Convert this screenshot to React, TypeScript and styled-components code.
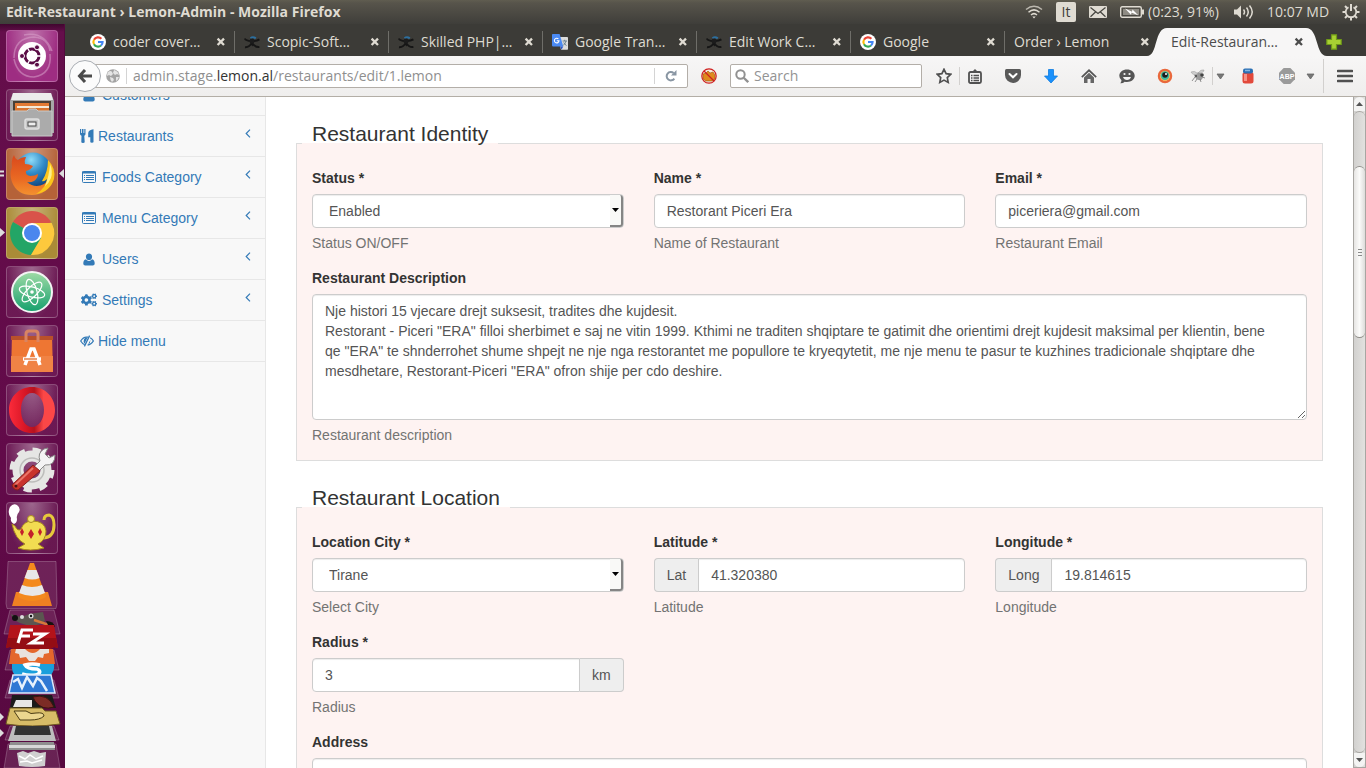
import React from "react";
import styled, { createGlobalStyle, css } from "styled-components";
import { FaCogs } from "react-icons/fa";

const uiFont = '"Open Sans", "Noto Sans", sans-serif';
const pageFont = '"Liberation Sans", Arial, sans-serif';

const GlobalStyle = createGlobalStyle`
  *, *::before, *::after { box-sizing: border-box; }
  body { margin: 0; background: #fff; }
  button, input, select, textarea { font: inherit; color: inherit; }
  button { padding: 0; border: 0; background: none; }
  svg { display: block; flex: none; }
`;

/* ---------- desktop ---------- */

const Desktop = styled.div`
  height: 100vh;
  display: flex;
  flex-direction: column;
  overflow: hidden;
`;

const TopPanel = styled.header`
  flex: none;
  height: 24px;
  padding: 0 6px;
  display: flex;
  align-items: center;
  justify-content: space-between;
  background: linear-gradient(#605d50 0, #57544b 3px, #3f3e3a 100%);
  color: #dfdbd2;
  font-family: ${uiFont};
  font-size: 14px;
  line-height: 24px;
  white-space: nowrap;
`;

const WindowTitle = styled.strong`
  font-weight: 700;
`;

const Indicators = styled.div`
  display: flex;
  align-items: center;
  gap: 13px;
`;

const Indicator = styled.button`
  display: flex;
  align-items: center;
  gap: 4px;
  height: 24px;
  text-align: left;
`;

const KeyboardLayout = styled.button`
  width: 20px;
  height: 20px;
  border-radius: 2px;
  background: #dfdbd2;
  color: #3c3b37;
  font-size: 14px;
  line-height: 20px;
`;

const IndicatorText = styled.span<{ $width: number }>`
  width: ${(p) => p.$width}px;
`;

const Workspace = styled.div`
  flex: 1;
  min-height: 0;
  display: flex;
`;

/* ---------- launcher ---------- */

const Launcher = styled.nav`
  flex: none;
  width: 65px;
  overflow: hidden;
  display: flex;
  flex-direction: column;
  padding-top: 6px;
  border-right: 1px solid #54093e;
  background: linear-gradient(#40062f 0, #650e4b 8px, #620a49 60%, #570940 100%);
`;

const LauncherItem = styled.button`
  flex: none;
  position: relative;
  width: 100%;
  height: 52px;
  margin-bottom: 7px;
  padding-left: 6px;
`;

const Tile = styled.span<{ $color?: string }>`
  display: block;
  width: 52px;
  height: 52px;
  border: 1px solid rgba(255, 255, 255, 0.22);
  border-radius: 4px;
  background: radial-gradient(ellipse at 50% 0, rgba(255, 255, 255, 0.38), rgba(255, 255, 255, 0.06) 75%), ${(p) => p.$color || "transparent"};

  & > svg { margin: -1px; }
`;

const Pip = styled.svg<{ $side: "left" | "right" }>`
  position: absolute;
  top: 20px;
  ${(p) => (p.$side === "left" ? css`left: 0;` : css`right: 0;`)}
`;

/* ---------- browser chrome ---------- */

const Browser = styled.div`
  flex: 1;
  min-width: 0;
  display: flex;
  flex-direction: column;
`;

const TabStrip = styled.div`
  flex: none;
  height: 32px;
  padding: 4px 0 0 16px;
  display: flex;
  align-items: center;
  background: #3c3b37;
  font-family: ${uiFont};
  font-size: 14px;
  line-height: 28px;
  color: #dfdbd2;
`;

const Tab = styled.div<{ $active?: boolean; $last?: boolean }>`
  position: relative;
  flex: 0 1 154px;
  min-width: 0;
  height: 28px;
  padding: 0 9px 0 ${(p) => (p.$active ? 12 : 9)}px;
  display: flex;
  align-items: center;
  gap: 7px;
  color: ${(p) => (p.$active ? "#4c4c4c" : "inherit")};

  &::after {
    content: "";
    position: absolute;
    right: 0;
    top: 3px;
    height: 22px;
    width: 1px;
    background: ${(p) => (p.$active || p.$last ? "transparent" : "#6f6e69")};
  }
`;

const TabShape = styled.svg`
  position: absolute;
  left: -12px;
  top: 0;
  width: calc(100% + 26px);
  height: 28px;
`;

const TabLabel = styled.span`
  position: relative;
  flex: 1;
  min-width: 0;
  overflow: hidden;
  white-space: nowrap;
`;

const TabClose = styled.button`
  position: relative;
  width: 10px;
  height: 10px;
`;

const NewTab = styled.button`
  margin-left: 13px;
`;

const Toolbar = styled.div`
  flex: none;
  height: 41px;
  padding-left: 4px;
  display: flex;
  align-items: center;
  border-bottom: 1px solid #b3aea6;
  background: linear-gradient(#f7f6f6, #efeeed);
  font-family: ${uiFont};
  font-size: 14px;
`;

const BackButton = styled.button`
  flex: none;
  z-index: 1;
  width: 32px;
  height: 32px;
  margin-right: -8px;
  display: grid;
  place-items: center;
  border: 1px solid #a9adb3;
  border-radius: 50%;
  background: #fbfbfb;
`;

const UrlBar = styled.div`
  flex: 1;
  min-width: 0;
  height: 24px;
  padding-left: 12px;
  display: flex;
  align-items: center;
  border: 1px solid #b3aea8;
  border-radius: 2px;
  background: #fff;
`;

const UrlText = styled.div`
  flex: 1;
  min-width: 0;
  margin-left: 6px;
  padding-left: 6px;
  border-left: 1px solid #d4d4d4;
  color: #8f8f8f;
  line-height: 16px;
  white-space: nowrap;
  outline: 0;

  b { font-weight: 400; color: #333; }
`;

const ReloadButton = styled.button`
  width: 33px;
  height: 16px;
  display: grid;
  place-items: center;
  border-left: 1px solid #d4d4d4;
`;

const SearchBox = styled.label`
  flex: none;
  width: 192px;
  height: 24px;
  padding: 0 4px;
  display: flex;
  align-items: center;
  gap: 5px;
  border: 1px solid #b3aea8;
  border-radius: 2px;
  background: #fff;

  input {
    flex: 1;
    min-width: 0;
    padding: 0;
    border: 0;
    outline: 0;
    background: none;
    line-height: 20px;
  }
  input::placeholder { color: #939393; opacity: 1; }
`;

const ToolButton = styled.button<{ $width?: number }>`
  flex: none;
  width: ${(p) => p.$width || 38}px;
  height: 24px;
  display: grid;
  place-items: center;
`;

const ToolGap = styled.span<{ $width: number }>`
  flex: none;
  width: ${(p) => p.$width}px;
`;

const ToolSeparator = styled.span<{ $height: number }>`
  flex: none;
  width: 1px;
  height: ${(p) => p.$height}px;
  background: #d2d0ce;
`;

/* ---------- page ---------- */

const Viewport = styled.div`
  flex: 1;
  min-height: 0;
  display: flex;
  overflow: hidden;
  background: #fff;
  color: #333;
  font-family: ${pageFont};
  font-size: 14px;
  line-height: 20px;
`;

const Sidebar = styled.nav`
  flex: none;
  width: 201px;
  overflow: hidden;
  border-right: 1px solid #e7e7e7;
  background: #f8f8f8;
`;

const MenuList = styled.ul`
  list-style: none;
  margin: -22px 0 0;
  padding: 0;
`;

const MenuLink = styled.a`
  display: flex;
  align-items: center;
  gap: 4px;
  height: 41px;
  padding: 0 14px 0 15px;
  border-bottom: 1px solid #e7e7e7;
  color: #337ab7;
  text-decoration: none;
`;

const MenuIcon = styled.span<{ $wide?: boolean }>`
  width: ${(p) => (p.$wide ? 18 : 14)}px;
  display: flex;
  justify-content: center;
`;

const Chevron = styled.svg`
  margin: 0 0 6px auto;
`;

const Main = styled.main`
  flex: 1;
  min-width: 0;
  overflow: hidden;
  padding: 22px 30px 0;
`;

const Section = styled.fieldset`
  min-width: 0;
  margin: 0 0 22px;
  padding: 0 15px;
  border: 1px solid #ddd;
  background: #fef3f2;
`;

const SectionTitle = styled.legend`
  margin-left: -10px;
  padding: 0 10px 18px;
  font-size: 21px;
  line-height: 30px;
`;

const Fields = styled.div`
  display: grid;
  grid-template-columns: repeat(3, 1fr);
  column-gap: 30px;
  padding-top: 1px;
`;

const Field = styled.div<{ $full?: boolean }>`
  min-width: 0;
  grid-column: ${(p) => (p.$full ? "1 / -1" : "auto")};
  margin-bottom: 15px;
`;

const FieldLabel = styled.label`
  display: block;
  margin-bottom: 6px;
  font-weight: 700;
`;

const Help = styled.p`
  margin: 5px 0 0;
  color: #737373;
`;

const control = css`
  display: block;
  width: 100%;
  border: 1px solid #ccc;
  border-radius: 4px;
  background: #fff;
  box-shadow: inset 0 1px 1px rgba(0, 0, 0, 0.075);
  color: #555;
  outline: 0;
`;

const TextInput = styled.input`
  ${control}
  height: 34px;
  padding: 6px 12px;
`;

const TextArea = styled.textarea`
  ${control}
  height: 126px;
  padding: 6px 24px 6px 12px;
  resize: vertical;
`;

const SelectWrap = styled.div`
  position: relative;
`;

const Select = styled.select`
  ${control}
  appearance: none;
  height: 34px;
  padding: 6px 16px;
`;

const SelectArrow = styled.span`
  position: absolute;
  top: 1px;
  right: 1px;
  bottom: 1px;
  width: 13px;
  display: grid;
  place-items: center;
  border-right: 2px solid #858585;
  border-bottom: 2px solid #858585;
  border-radius: 0 3px 3px 0;
  background: #f9f9f7;
  pointer-events: none;
`;

const InputGroup = styled.div`
  display: flex;

  ${TextInput} { flex: 1; min-width: 0; }
  ${TextInput}:not(:first-child) { border-top-left-radius: 0; border-bottom-left-radius: 0; }
  ${TextInput}:not(:last-child) { border-top-right-radius: 0; border-bottom-right-radius: 0; }
`;

const Addon = styled.span<{ $end?: boolean }>`
  flex: none;
  padding: 6px 12px;
  border: 1px solid #ccc;
  background: #eee;
  color: #555;
  ${(p) =>
    p.$end
      ? css`border-left: 0; border-radius: 0 4px 4px 0;`
      : css`border-right: 0; border-radius: 4px 0 0 4px;`}
`;

/* ---------- scrollbar ---------- */

const ScrollBar = styled.div`
  flex: none;
  width: 13px;
  display: flex;
  flex-direction: column;
  border: 1px solid #a8a6a2;
  border-top: 0;
  background: linear-gradient(90deg, #d2d1cf, #e2e1df);
`;

const ScrollButton = styled.button`
  height: 14px;
  display: grid;
  place-items: center;
  border-radius: 6px 6px 0 0;
  background: #f4f4f3;

  &:last-child { border-radius: 0 0 6px 6px; }
`;

const ScrollTrack = styled.div`
  flex: 1;
  min-height: 0;
  padding-top: 54px;
  border: 1px solid #a8a6a2;
  border-width: 1px 0;
  border-radius: 6px;
`;

const ScrollThumb = styled.div`
  height: 42%;
  max-height: 172px;
  display: grid;
  place-items: center;
  border: 1px solid #8f8d89;
  border-width: 1px 0;
  border-radius: 6px;
  background: linear-gradient(90deg, #e6e5e3, #fbfbfa 50%, #dddcda);
`;

/* ---------- small icons ---------- */

const GoogleIcon = () => (
  <svg width="16" height="16" viewBox="0 0 16 16">
    <circle cx="8" cy="8" r="8" fill="#fff" />
    <g fill="none" strokeWidth="2.1">
      <path d="M11.4 4.8A4.6 4.6 0 0 0 4 5.8" stroke="#ea4335" />
      <path d="M4 5.7a4.6 4.6 0 0 0 0 4.6" stroke="#fbbc05" />
      <path d="M4 10.2a4.6 4.6 0 0 0 7 1.3" stroke="#34a853" />
      <path d="M11 11.5A4.6 4.6 0 0 0 12.6 8H8" stroke="#4285f4" />
    </g>
  </svg>
);

const ScopicIcon = () => (
  <svg width="16" height="16" viewBox="0 0 16 16">
    <path d="M6.500 4.200Q9 2.200 11.800 4.400" stroke="#2d6f9f" strokeWidth="2" fill="none" />
    <path d="M.8 4.500C2 7.600 12 7.800 15.400 5.400M1 13.200c2.400.2 5.400-1.600 7-4.600 1.800 3.200 4.400 4.800 7.400 4.400" stroke="#161616" strokeWidth="1.900" fill="none" />
    <circle cx="8" cy="7" r="2.500" fill="#1c1c1c" />
    <path d="M6.800 10h3l-1.500 2.400z" fill="#161616" />
  </svg>
);

const TranslateIcon = () => (
  <svg width="16" height="16" viewBox="0 0 16 16">
    <path d="M6 3h9.200q.8 0 .8.8V15q0 .8-.8.8H9z" fill="#dcdcdc" />
    <path d="M.8 0h6.800l3.700 12.400H.8q-.8 0-.8-.8V.8Q0 0 .8 0z" fill="#4a8af4" />
    <path d="M8.200 12.400h3L9.500 15.800z" fill="#2a56c6" />
    <path d="M6.400 5A2.300 2.300 0 1 0 7 6.700H4.800" fill="none" stroke="#fff" strokeWidth="1.100" />
    <path d="M10.600 7H15M12.700 5.800V7M14 7q-.7 3-3 4.600M11.700 8.500q1 2 2.800 3" fill="none" stroke="#607988" strokeWidth=".9" />
  </svg>
);

const CloseIcon = () => (
  <svg width="10" height="10" viewBox="0 0 10 10">
    <path d="M1.600 1.600l6.400 6.400M8 1.600L1.600 8" stroke="currentColor" strokeWidth="2.300" />
  </svg>
);

const CaretDown = () => (
  <svg width="9" height="7" viewBox="0 0 9 7">
    <path d="M1 1h7L4.500 6z" fill="#777" stroke="#666" strokeWidth=".8" />
  </svg>
);

const UserIcon = () => (
  <svg width="12" height="13" viewBox="0 0 12 13">
    <path d="M6 .5c1.900 0 3.100 1.400 3.100 3.200C9.100 5.800 7.700 7.100 6 7.100S2.900 5.800 2.900 3.700C2.900 1.900 4.100.5 6 .5zM3 6.300C3.800 7.300 4.900 7.900 6 7.900s2.200-.6 3-1.600c2 .3 2.700 2.200 2.700 4.300 0 1.200-.8 1.900-1.900 1.900H2.200C1.100 12.500.3 11.800.3 10.600.3 8.500 1 6.600 3 6.300z" fill="currentColor" />
  </svg>
);

const ListAltIcon = () => (
  <svg width="14" height="12" viewBox="0 0 14 12">
    <rect x=".5" y=".5" width="13" height="11" rx="1" fill="none" stroke="currentColor" />
    <path d="M0 1.500h14" stroke="currentColor" strokeWidth="2" />
    <path d="M2 4.500h1M2 6.500h1M2 8.500h1M4 4.500h8M4 6.500h8M4 8.500h8" stroke="currentColor" strokeWidth="1" />
  </svg>
);

const CutleryIcon = () => (
  <svg width="14" height="14" viewBox="0 0 14 14">
    <path d="M0 0h1.200v4h.8V0h1.500v4h.8V0h1.200v5q0 1.200-1.200 1.800L4.700 13q0 1-1.700 1-1.700 0-1.700-1l.2-6.200Q0 6.200 0 5zM13.500.2V13q0 .8-1.600.8T10.300 13V8.200H8.200V4Q8.600.6 13.500.2z" fill="currentColor" />
  </svg>
);

const EyeCloseIcon = () => (
  <svg width="14" height="12" viewBox="0 0 14 12">
    <path d="M8 2.200Q3.500 1.200.7 6q1.700 2.800 4 3.800M10.200 2.800Q12.300 4 13.400 6 11.200 9.700 7.600 10.200" fill="none" stroke="currentColor" strokeWidth="1.200" />
    <path d="M7.500 2.600L4.600 8.700Q3 6.500 4 4.200 5 2.300 7.500 2.600zM10.400 5L8.200 9Q10.600 8 10.400 5z" fill="currentColor" />
    <path d="M9.600.6L4.400 11.400" stroke="currentColor" strokeWidth="1.300" />
  </svg>
);

const AngleLeft = () => (
  <Chevron width="6" height="9" viewBox="0 0 6 9">
    <path d="M5 .7L1.200 4.500 5 8.300" fill="none" stroke="#337ab7" strokeWidth="1.200" />
  </Chevron>
);

/* ---------- launcher icons ---------- */

const Art = ({ children }: { children: React.ReactNode }) => (
  <svg width="52" height="52" viewBox="0 0 52 52">{children}</svg>
);

const UbuntuArt = () => (
  <Art>
    <path d="M8 28Q8 8 28 7q14 1 16 14M44 24q2 20-16 23-16 0-20-18M18 5q20-4 28 16" fill="none" stroke="#d9a0cb" strokeOpacity=".55" strokeWidth="1.500" />
    <circle cx="26" cy="26" r="14" fill="#fff" />
    <circle cx="26" cy="26" r="7" fill="none" stroke="#5a0c46" strokeWidth="3" />
    <path d="M26 26H35M26 26l-5-9M26 26l-5 9" stroke="#fff" strokeWidth="1.400" />
    <circle cx="26" cy="26" r="5.300" fill="#fff" />
    <g fill="#5a0c46" stroke="#fff" strokeWidth="1">
      <circle cx="16" cy="26" r="2.500" /><circle cx="31" cy="17.300" r="2.500" /><circle cx="31" cy="34.700" r="2.500" />
    </g>
  </Art>
);

const FilesArt = () => (
  <Art>
    <path d="M7 4h38l3 8v32H4V12z" fill="#a7a7a7" />
    <path d="M7 4h38l2 7H5z" fill="#ececec" />
    <path d="M7 12h38v12H7z" fill="#4a4036" />
    <path d="M9 14h34v8H9z" fill="#e37a33" />
    <path d="M11 17h32v3H11z" fill="#f6ead8" />
    <path d="M9 19h34v4H9z" fill="#d8742f" />
    <path d="M6 22h15l2-2h7l2 2h14v25H6z" fill="#ababab" stroke="#c9c9c9" />
    <rect x="19" y="30" width="14" height="10" rx="2" fill="#c8c8c8" stroke="#e0e0e0" strokeWidth="1.500" />
    <rect x="22" y="33" width="8" height="4" fill="#eee" stroke="#444" />
  </Art>
);

const FirefoxArt = () => (
  <Art>
    <defs>
      <radialGradient id="globe" cx=".45" cy=".2" r=".8"><stop stopColor="#8fdcf8" /><stop offset=".45" stopColor="#2f8ac8" /><stop offset="1" stopColor="#0d3d75" /></radialGradient>
      <linearGradient id="fox" x2="0" y2="1"><stop stopColor="#d9481c" /><stop offset=".6" stopColor="#ea6a23" /><stop offset="1" stopColor="#f3912f" /></linearGradient>
    </defs>
    <circle cx="27" cy="23" r="18.500" fill="url(#globe)" />
    <path d="M8 7q1 4 4 5 3-3 8-3-2 4-1 7 4 0 8 2-2 4-7 5-1 4 4 5 5 0 8-2 0 4-4 7-4 2-7 1 8 7 17 2 8-5 8-19 3 9 0 15-5 15-20 15T6 34Q3 26 6 19 5 12 8 7z" fill="url(#fox)" />
    <path d="M42 12q8 8 6 19-4 13-18 15 10-6 11-15-3 3-5 2 6-9 6-21z" fill="#fbc41b" />
    <path d="M44 16q3 7 1 14-2 5-6 8 4-9 5-22z" fill="#fff08a" />
  </Art>
);

const ChromeArt = () => (
  <Art>
    <path d="M26 26L7 15A22 22 0 0 1 45 15z" fill="#d9534a" />
    <path d="M26 26L7 15a22 22 0 0 0 18 33l11-18z" fill="#23a566" />
    <path d="M26 16h19.700A22 22 0 0 1 25 48l10-17z" fill="#fdc93d" />
    <circle cx="26" cy="26" r="10" fill="#fff" />
    <circle cx="26" cy="26" r="8" fill="#4a87ee" />
  </Art>
);

const AtomArt = () => (
  <Art>
    <defs><linearGradient id="atom" x2="0" y2="1"><stop stopColor="#9fdba6" /><stop offset="1" stopColor="#16a06d" /></linearGradient></defs>
    <circle cx="26" cy="26" r="20" fill="url(#atom)" stroke="#f4f4f4" strokeWidth="2" />
    <g fill="none" stroke="#fff" strokeWidth="1.200">
      <ellipse cx="26" cy="26" rx="13" ry="5" transform="rotate(15 26 26)" />
      <ellipse cx="26" cy="26" rx="13" ry="5" transform="rotate(75 26 26)" />
      <ellipse cx="26" cy="26" rx="13" ry="5" transform="rotate(135 26 26)" />
    </g>
    <circle cx="26" cy="26" r="1.800" fill="#fff" />
  </Art>
);

const SoftwareArt = () => (
  <Art>
    <path d="M6 11h40l1 36H5z" fill="#ee7633" />
    <path d="M5 11h42v4H5z" fill="#b9512a" />
    <path d="M5 31h42v16H5z" fill="#f08345" />
    <path d="M20 17V9q0-3 3-3h6q3 0 3 3v8" fill="none" stroke="#d98462" strokeWidth="3" />
    <path d="M19 40l6-16h3l6 16M17 34h18" fill="none" stroke="#fff" strokeWidth="3.500" />
    <path d="M18 34h13" stroke="#e26d2e" strokeWidth="1.300" />
  </Art>
);

const OperaArt = () => (
  <Art>
    <defs><linearGradient id="opera" x2="1" y2="0"><stop stopColor="#fb2b3a" /><stop offset=".35" stopColor="#d81626" /><stop offset=".55" stopColor="#b5121f" /><stop offset=".75" stopColor="#fb4747" /></linearGradient></defs>
    <path fillRule="evenodd" d="M26 3c13 0 23 10 23 23S39 49 26 49 3 39 3 26 13 3 26 3zm0 6c-7 0-11 8-11 17s4 17 11 17 12-8 12-17S33 9 26 9z" fill="url(#opera)" />
  </Art>
);

const SettingsArt = () => (
  <Art>
    <circle cx="26" cy="27" r="14" fill="none" stroke="#e6e6e4" strokeWidth="11" />
    <circle cx="26" cy="27" r="20" fill="none" stroke="#e6e6e4" strokeWidth="5" strokeDasharray="8 7.700" />
    <circle cx="26" cy="27" r="12" fill="none" stroke="#bdbdbb" strokeWidth="1.500" />
    <path d="M27 25l7-7q-3-8 4-12l4-1-3 6 4 4 6-3q0 11-10 10l-7 7z" fill="#f4f4f4" stroke="#8a8a88" />
    <path d="M27 22l7 6-22 19q-5 0-6-5z" fill="#c9332c" stroke="#84201c" />
    <path d="M27 25L9 42" stroke="#ea7468" strokeWidth="2" />
    <circle cx="10" cy="43" r="1.500" fill="#4b1412" />
  </Art>
);

const LampArt = () => (
  <Art>
    <path d="M4 5q3-4 7-2 4 3 2 7-3 3-2 7 0 4-3 5-4-2-3-6-4-5-1-11z" fill="#fff" />
    <path d="M38 18q0-5 5-5 5 1 5 10 0 12-10 13" fill="none" stroke="#e6c83b" strokeWidth="3" />
    <path d="M6 22l3 2q3 6 6 3 3-8 11-8 13 0 14 10 0 9-8 13l6 4q-14 4-26 0l7-4Q9 37 6 22z" fill="#f2dc51" stroke="#a98b1d" />
    <circle cx="25" cy="17" r="3.500" fill="#f4e16d" stroke="#a98b1d" />
    <path d="M16 26l2 4-2 4-2-4zM25 27l3 5-3 5-3-5zM34 26l2 4-2 4-2-4z" fill="#c4202b" />
  </Art>
);

const StackArt = () => (
  <svg width="64" height="207" viewBox="0 561 64 207">
    <g fill="#fff" fillOpacity=".1" stroke="#fff" strokeOpacity=".22">
      <path d="M8 561.500h48l1 42-1 5H7l-1-5zM10 610h44l6 24H4zM10 650h44l5 20H5zM10 680h44l5 18H5zM10 726h44l5 14H5zM8 744h48l4 24H4z" />
    </g>
    <path d="M16 592h32l4 14H12z" fill="#ef8022" />
    <path d="M30 563h4l12 34q-14 8-28 0z" fill="#f48a1d" />
    <path d="M27.500 570h9l3 8q-7 3-15 0zM22 585q10 4 20 0l3 8q-12 6-26 0z" fill="#e8e8e8" />
    <path d="M11 614q8 5 18 0 6-1 14-2l2 9q-10 8-25 2-8-3-9-9z" fill="#5b5650" />
    <circle cx="15" cy="618" r="3" fill="#111" /><circle cx="22" cy="617" r="2" fill="#ddd" /><circle cx="31" cy="616" r="2.500" fill="#ddd" /><circle cx="31" cy="616" r="1.200" fill="#111" />
    <path d="M34 620l18 6" stroke="#d5793b" strokeWidth="2.500" /><path d="M46 621q8 0 9 6l-7-2z" fill="#17120f" />
    <path d="M10 625h44l4 23-4-1-4 2H14l-4-2-4 1z" fill="#b3131a" />
    <path d="M8 638h48l2 10-4-1-4 2H14l-4-2-4 1z" fill="#940d14" />
    <path d="M18 643l4-13h11M20 636h10M33 634h12L31 643h13" stroke="#fff" strokeWidth="3" fill="none" />
    <path d="M11 649h42l2 15H9z" fill="#e4672c" />
    <path d="M16 649h33v4l-5 1-1 4-5-1-3 4h-6l-3-4-6 1-1-4-4-1z" fill="#e9e3de" /><path d="M25 649h15q-7 8-15 0z" fill="#e4672c" />
    <path d="M12 664h42q1 8-5 13-16 6-32 0-6-4-5-13z" fill="#1a9fdc" />
    <path d="M40 665q-8-2-15 0 2 4 12 4 6 3-1 6-8 1-14-1" fill="none" stroke="#fff" strokeWidth="3.500" />
    <path d="M13 675h38l4 18H9z" fill="#2f78d4" stroke="#dbe9fa" strokeWidth="1.500" />
    <path d="M13 682l5-3 4 9 5-11 6 9 4-8 4 3 6 10" fill="none" stroke="#e6f0fc" strokeWidth="2.500" />
    <path d="M12 695h40l4 13H10z" fill="#1b1b1b" /><path d="M16 700h16v7H13z" fill="#e6e6e6" />
    <path d="M33 697q15-4 21 10-12 4-19-6z" fill="#7c2b25" stroke="#3d1210" />
    <path d="M10 708h32l3 3h11l4 13q-28 4-54 0z" fill="#d7bc67" stroke="#6e5a20" />
    <path d="M14 711h12q5 4 10 2 8-1 8 3-4 4-14 4H20z" fill="#ecd78f" stroke="#4b3d14" />
    <path d="M13 726h39l4 15H8z" fill="#bdbdbd" /><path d="M16 726h33l2 9H14z" fill="#333" />
    <path d="M10 742h44l1 8H9z" fill="#8f8f8f" /><path d="M9 745h46v3H9z" fill="#d8d8d8" />
    <path d="M17 753l6-2 5 2 6-2 6 2 6-1-1 14q-13 2-26 0z" fill="#cfcfcf" />
    <path d="M19 756l6 3 5-4 6 4 7-3M20 762l7-1 5 2 10-3" stroke="#fff" strokeWidth="1.500" fill="none" />
    <path d="M0 713l4 4-4 4zM0 729l4 4-4 4z" fill="#ddd" />
  </svg>
);

const apps = [
  { name: "Dash", Icon: UbuntuArt, color: "#98207a" },
  { name: "Files", Icon: FilesArt },
  { name: "Firefox", Icon: FirefoxArt, color: "#b0582c", open: true },
  { name: "Chrome", Icon: ChromeArt, color: "#a5842b", running: true },
  { name: "Atom", Icon: AtomArt },
  { name: "Software Center", Icon: SoftwareArt },
  { name: "Opera", Icon: OperaArt },
  { name: "System Settings", Icon: SettingsArt },
  { name: "Teapot", Icon: LampArt },
];

const tabs = [
  { label: "coder cover…", Icon: GoogleIcon },
  { label: "Scopic-Soft…", Icon: ScopicIcon },
  { label: "Skilled PHP|…", Icon: ScopicIcon },
  { label: "Google Tran…", Icon: TranslateIcon },
  { label: "Edit Work C…", Icon: ScopicIcon },
  { label: "Google", Icon: GoogleIcon },
  { label: "Order › Lemon", last: true },
  { label: "Edit-Restauran…", active: true },
];

const menu = [
  { label: "Customers", Icon: UserIcon, wide: true },
  { label: "Restaurants", Icon: CutleryIcon, sub: true },
  { label: "Foods Category", Icon: ListAltIcon, wide: true, sub: true },
  { label: "Menu Category", Icon: ListAltIcon, wide: true, sub: true },
  { label: "Users", Icon: UserIcon, wide: true, sub: true },
  { label: "Settings", Icon: () => <FaCogs size={16} />, wide: true, sub: true },
  { label: "Hide menu", Icon: EyeCloseIcon },
];

const description =
  'Nje histori 15 vjecare drejt suksesit, tradites dhe kujdesit.\nRestorant - Piceri "ERA" filloi sherbimet e saj ne vitin 1999. Kthimi ne traditen shqiptare te gatimit dhe orientimi drejt kujdesit maksimal per klientin, bene qe "ERA" te shnderrohet shume shpejt ne nje nga restorantet me popullore te kryeqytetit, me nje menu te pasur te kuzhines tradicionale shqiptare dhe mesdhetare, Restorant-Piceri "ERA" ofron shije per cdo deshire.';

/* ---------- composed parts ---------- */

const DropDown = ({ id, value }: { id: string; value: string }) => (
  <SelectWrap>
    <Select id={id} defaultValue={value}>
      <option>{value}</option>
    </Select>
    <SelectArrow>
      <svg width="7" height="4" viewBox="0 0 7 4"><path d="M0 0h7L3.500 4z" fill="#000" /></svg>
    </SelectArrow>
  </SelectWrap>
);

const FormField = ({ id, label, help, full, children }: { id: string; label: string; help?: string; full?: boolean; children: React.ReactNode }) => (
  <Field $full={full}>
    <FieldLabel htmlFor={id}>{label}</FieldLabel>
    {children}
    {help && <Help>{help}</Help>}
  </Field>
);

const PanelIndicators = () => (
  <Indicators>
    <Indicator aria-label="Network">
      <svg width="18" height="14" viewBox="0 0 18 14" fill="none" stroke="#dfdbd2" strokeWidth="1.500">
        <path d="M1 4.500Q9-2 17 4.500" strokeOpacity=".75" /><path d="M3.500 7.300Q9 2.500 14.500 7.300" /><path d="M6 10Q9 7.300 12 10" /><path d="M7.300 11.500h3.400L9 13.500z" fill="#dfdbd2" stroke="none" />
      </svg>
    </Indicator>
    <KeyboardLayout>It</KeyboardLayout>
    <Indicator aria-label="Mail">
      <svg width="18" height="12" viewBox="0 0 18 12">
        <rect width="18" height="12" rx="1" fill="#dfdbd2" />
        <path d="M1.500 1.500L9 7.500l7.500-6M1.500 10.800L6.500 6M16.500 10.800L11.500 6" fill="none" stroke="#45443f" strokeWidth="1.200" />
      </svg>
    </Indicator>
    <Indicator>
      <svg width="24" height="12" viewBox="0 0 24 12">
        <rect x=".7" y=".7" width="20.600" height="10.600" rx="1.500" fill="none" stroke="#dfdbd2" strokeWidth="1.400" />
        <rect x="3" y="3" width="16" height="6" fill="#8f8c84" /><path d="M22 3.500h2v5h-2z" fill="#dfdbd2" />
        <path d="M5 2.500l7 3.200.5-2.200 6 6-7-3-.5 2.200z" fill="#fff" />
      </svg>
      <IndicatorText $width={73}>(0:23, 91%)</IndicatorText>
    </Indicator>
    <Indicator aria-label="Sound">
      <svg width="20" height="14" viewBox="0 0 20 14">
        <path d="M0 4.500h3l4-4v13l-4-4H0z" fill="#dfdbd2" />
        <path d="M9.500 4.500q2 2.500 0 5M12.500 2.500q3.500 4.500 0 9M15.500.5q5.500 6.500 0 13" fill="none" stroke="#dfdbd2" strokeWidth="1.500" />
      </svg>
    </Indicator>
    <Indicator>
      <IndicatorText $width={62}>10:07 MD</IndicatorText>
    </Indicator>
    <Indicator aria-label="Session">
      <svg width="18" height="18" viewBox="0 0 18 18" fill="none" stroke="#dfdbd2">
        <path d="M6.500 4.300a5.300 5.300 0 1 0 5 0" strokeWidth="1.800" />
        <path d="M9 1v7" strokeWidth="2" />
        <path d="M.5 9h3M14.500 9h3M9 14.500v3M3 3l2 2M15 3l-2 2M3 15l2-2M15 15l-2-2" strokeWidth="2" />
      </svg>
    </Indicator>
  </Indicators>
);

const ToolbarIcons = () => (
  <>
    <ToolGap $width={7} />
    <ToolButton $width={30} aria-label="Bookmark">
      <svg width="16" height="16" viewBox="0 0 16 16"><path d="M8 1.300l2.100 4.400 4.700.6-3.500 3.300.9 4.800L8 12.100l-4.200 2.300.9-4.800L1.200 6.300l4.700-.6z" fill="none" stroke="#505050" strokeWidth="1.700" /></svg>
    </ToolButton>
    <ToolSeparator $height={18} />
    <ToolButton $width={30} aria-label="Bookmarks list">
      <svg width="14" height="15" viewBox="0 0 14 15"><rect x="1" y="3" width="12" height="11" rx="1.500" fill="none" stroke="#505050" strokeWidth="1.800" /><path d="M4 3l3-3 3 3z" fill="#505050" /><path d="M3 6.500h1.500M3 9h1.500M3 11.500h1.500M5.500 6.500H11M5.500 9H11M5.500 11.500H11" stroke="#505050" strokeWidth="1.300" /></svg>
    </ToolButton>
    <ToolGap $width={4} />
    <ToolButton aria-label="Pocket">
      <svg width="16" height="14" viewBox="0 0 16 14"><path d="M1.500 0h13Q16 0 16 1.500V6q0 3.500-2.500 5.800T8 14t-5.500-2.200T0 6V1.500Q0 0 1.500 0z" fill="#595959" /><path d="M4.500 5L8 8.300 11.500 5" fill="none" stroke="#fff" strokeWidth="2" strokeLinecap="round" /></svg>
    </ToolButton>
    <ToolButton aria-label="Downloads">
      <svg width="14" height="15" viewBox="0 0 14 15"><path d="M4.500.5h5v6.500h4L7 14 .5 7h4z" fill="#1b91fb" stroke="#0f7ce0" strokeWidth=".8" /></svg>
    </ToolButton>
    <ToolButton aria-label="Home">
      <svg width="16" height="15" viewBox="0 0 16 15"><path d="M.8 8.200L8 1.300l7.200 6.900" fill="none" stroke="#555" strokeWidth="1.700" /><path d="M3 8.500l5-4.700 5 4.700V14H9.500v-4h-3v4H3z" fill="#666" /></svg>
    </ToolButton>
    <ToolButton aria-label="Chat">
      <svg width="16" height="15" viewBox="0 0 16 15"><path d="M8 .5c4.300 0 7.700 2.600 7.700 6.300S12.300 13 8 13q-1.300 0-2.300-.3Q4 14.500 1.300 14.300q1.200-1.300 1.200-3Q.3 9.500.3 6.800C.3 3.100 3.700.5 8 .5z" fill="#555" /><circle cx="5.500" cy="5" r="1.100" fill="#f4f4f4" /><circle cx="10.500" cy="5" r="1.100" fill="#f4f4f4" /><path d="M4 8h8q-1 3-4 3T4 8z" fill="#f4f4f4" /></svg>
    </ToolButton>
    <ToolButton aria-label="Eye">
      <svg width="16" height="16" viewBox="0 0 16 16"><circle cx="8" cy="8" r="6" fill="#fff" stroke="#e9683c" strokeWidth="2.500" /><circle cx="8" cy="8" r="5" fill="#f5b64a" /><circle cx="8" cy="7.600" r="4.300" fill="#3fb9a0" /><circle cx="8" cy="7" r="2.800" fill="#1c1c1c" /><circle cx="9" cy="6" r="1" fill="#fff" /></svg>
    </ToolButton>
    <ToolButton $width={28} aria-label="Firebug">
      <svg width="16" height="14" viewBox="0 0 16 14"><path d="M4 6q4-5 8-1 2 4-1 6-5 1-7-5z" fill="#9a9a9a" /><path d="M1 3q4-2 7 2-5 2-7-2zM8 4q3-4 6-3 0 3-6 3z" fill="#cfcfcf" stroke="#999" strokeWidth=".5" /><path d="M5 8L2 12M7 10l-2 3M10 10l1 3M12 8l3 1" stroke="#777" strokeWidth=".8" /><circle cx="12" cy="6" r="1.800" fill="#444" /><circle cx="6" cy="7" r="1" fill="#444" /></svg>
    </ToolButton>
    <ToolSeparator $height={18} />
    <ToolButton $width={15} aria-label="Firebug menu"><CaretDown /></ToolButton>
    <ToolButton $width={40} aria-label="Cookies">
      <svg width="12" height="16" viewBox="0 0 12 16"><rect x=".5" y="4" width="11" height="11.500" rx="2.500" fill="#e2493b" /><path d="M3.500 6v7" stroke="#f59287" strokeWidth="3" /><rect x="1" y=".5" width="10" height="5" rx="2" fill="#2a6fb3" /><path d="M3 2.500h5" stroke="#84b7e4" strokeWidth="1.500" /></svg>
    </ToolButton>
    <ToolButton aria-label="Adblock Plus">
      <svg width="16" height="16" viewBox="0 0 16 16"><path d="M4.700 0h6.600L16 4.700v6.600L11.300 16H4.700L0 11.300V4.700z" fill="#9a9a9a" /><text x="8" y="10.800" textAnchor="middle" fontFamily="Liberation Sans, sans-serif" fontWeight="700" fontSize="7" fill="#fff">ABP</text></svg>
    </ToolButton>
    <ToolButton $width={9} aria-label="Adblock menu"><CaretDown /></ToolButton>
    <ToolGap $width={8} />
    <ToolSeparator $height={34} />
    <ToolButton $width={42} aria-label="Menu">
      <svg width="16" height="14" viewBox="0 0 16 14"><path d="M1 2h14M1 7h14M1 12h14" stroke="#505050" strokeWidth="2.600" strokeLinecap="round" /></svg>
    </ToolButton>
  </>
);

export default function App() {
  return (
    <>
      <GlobalStyle />
      <Desktop>
        <TopPanel>
          <WindowTitle>Edit-Restaurant › Lemon-Admin - Mozilla Firefox</WindowTitle>
          <PanelIndicators />
        </TopPanel>
        <Workspace>
          <Launcher>
            {apps.map(({ name, Icon, color, open, running }) => (
              <LauncherItem key={name} aria-label={name}>
                <Tile $color={color}><Icon /></Tile>
                {open && <Pip $side="left" width="5" height="12"><path d="M0 3.500h4M0 7.500h4" stroke="#ddd" strokeWidth="2" /></Pip>}
                {open && <Pip $side="right" width="5" height="12"><path d="M5 1v9L0 5.500z" fill="#ddd" /></Pip>}
                {running && <Pip $side="left" width="5" height="12"><path d="M0 1v9l5-4.500z" fill="#ddd" /></Pip>}
              </LauncherItem>
            ))}
            <StackArt />
          </Launcher>
          <Browser>
            <TabStrip>
              {tabs.map(({ label, Icon, active, last }) => (
                <Tab key={label} $active={active} $last={last}>
                  {active && (
                    <TabShape viewBox="0 0 180 28" preserveAspectRatio="none">
                      <path d="M0 28C11 28 7 0 20 0H159C172 0 168 28 180 28z" fill="#f7f6f6" />
                    </TabShape>
                  )}
                  {Icon && <Icon />}
                  <TabLabel>{label}</TabLabel>
                  <TabClose aria-label="Close tab"><CloseIcon /></TabClose>
                </Tab>
              ))}
              <NewTab aria-label="New tab">
                <svg width="16" height="16" viewBox="0 0 16 16"><path d="M5.500.8h5v4.700h4.700v5h-4.700v4.700h-5v-4.700H.8v-5h4.700z" fill="#a8d033" stroke="#6f9a17" strokeWidth="1.200" /></svg>
              </NewTab>
            </TabStrip>
            <Toolbar>
              <BackButton aria-label="Back">
                <svg width="16" height="14" viewBox="0 0 16 14"><path d="M8 1L2.500 7 8 13M2.500 7H15" fill="none" stroke="#4b4b4b" strokeWidth="3" /></svg>
              </BackButton>
              <UrlBar>
                <svg width="14" height="14" viewBox="0 0 14 14"><circle cx="7" cy="7" r="6.800" fill="#a3a3a3" /><path d="M2 3q3-2 4 0l1 2-2 2-2-1-2 1q0-2 1-4zM8 1q4 1 5 5l-2-1-2 1-2-2zM4 8l3 1 1 2-2 2q-2-2-2-5zM10 8l3 0q-1 3-3 4z" fill="#e4e4e4" /></svg>
                <UrlText role="textbox" aria-label="Address bar" tabIndex={0}>
                  admin.stage.<b>lemon.al</b>/restaurants/edit/1.lemon
                </UrlText>
                <ReloadButton aria-label="Reload">
                  <svg width="12" height="12" viewBox="0 0 12 12"><path d="M9.300 8.600A4.200 4.200 0 1 1 8.600 3" fill="none" stroke="#8996a3" strokeWidth="2" /><path d="M11.500 0v5.500H6z" fill="#8996a3" /></svg>
                </ReloadButton>
              </UrlBar>
              <ToolButton $width={42} aria-label="Blocked">
                <svg width="16" height="16" viewBox="0 0 16 16"><circle cx="8" cy="8" r="7.200" fill="#f6e9dd" /><path d="M2 6l3-1 2-2 2 2 3-1 2 3v4l-3 2H5l-3-2z" fill="#e08a1e" stroke="#9c5710" strokeWidth=".6" /><circle cx="8" cy="8" r="7.200" fill="none" stroke="#cf2020" strokeWidth="1.200" /><path d="M3 3l10 10" stroke="#cf2020" strokeWidth="1.200" /></svg>
              </ToolButton>
              <SearchBox>
                <svg width="14" height="14" viewBox="0 0 14 14" fill="none" stroke="#919191"><circle cx="5.500" cy="5.500" r="4.200" strokeWidth="2" /><path d="M8.700 8.700l4.500 4.500" strokeWidth="2.300" /></svg>
                <input type="search" placeholder="Search" aria-label="Search" />
              </SearchBox>
              <ToolbarIcons />
            </Toolbar>
            <Viewport>
              <Sidebar>
                <MenuList>
                  {menu.map(({ label, Icon, wide, sub }) => (
                    <li key={label}>
                      <MenuLink href="#">
                        <MenuIcon $wide={wide}><Icon /></MenuIcon>
                        {label}
                        {sub && <AngleLeft />}
                      </MenuLink>
                    </li>
                  ))}
                </MenuList>
              </Sidebar>
              <Main>
                <Section>
                  <SectionTitle>Restaurant Identity</SectionTitle>
                  <Fields>
                    <FormField id="status" label="Status *" help="Status ON/OFF"><DropDown id="status" value="Enabled" /></FormField>
                    <FormField id="name" label="Name *" help="Name of Restaurant"><TextInput id="name" defaultValue="Restorant Piceri Era" /></FormField>
                    <FormField id="email" label="Email *" help="Restaurant Email"><TextInput id="email" type="email" defaultValue="piceriera@gmail.com" /></FormField>
                    <FormField id="description" label="Restaurant Description" help="Restaurant description" full>
                      <TextArea id="description" spellCheck={false} defaultValue={description} />
                    </FormField>
                  </Fields>
                </Section>
                <Section>
                  <SectionTitle>Restaurant Location</SectionTitle>
                  <Fields>
                    <FormField id="city" label="Location City *" help="Select City"><DropDown id="city" value="Tirane" /></FormField>
                    <FormField id="lat" label="Latitude *" help="Latitude">
                      <InputGroup><Addon>Lat</Addon><TextInput id="lat" defaultValue="41.320380" /></InputGroup>
                    </FormField>
                    <FormField id="long" label="Longitude *" help="Longitude">
                      <InputGroup><Addon>Long</Addon><TextInput id="long" defaultValue="19.814615" /></InputGroup>
                    </FormField>
                    <FormField id="radius" label="Radius *" help="Radius">
                      <InputGroup><TextInput id="radius" defaultValue="3" /><Addon $end>km</Addon></InputGroup>
                    </FormField>
                    <FormField id="address" label="Address" full><TextInput id="address" /></FormField>
                  </Fields>
                </Section>
              </Main>
              <ScrollBar>
                <ScrollButton aria-label="Scroll up"><svg width="7" height="4" viewBox="0 0 7 4"><path d="M0 4h7L3.500 0z" fill="#555" /></svg></ScrollButton>
                <ScrollTrack>
                  <ScrollThumb><svg width="4" height="7" viewBox="0 0 4 7"><path d="M0 .5h4M0 3.500h4M0 6.500h4" stroke="#8a8a8a" /></svg></ScrollThumb>
                </ScrollTrack>
                <ScrollButton aria-label="Scroll down"><svg width="7" height="4" viewBox="0 0 7 4"><path d="M0 0h7L3.500 4z" fill="#555" /></svg></ScrollButton>
              </ScrollBar>
            </Viewport>
          </Browser>
        </Workspace>
      </Desktop>
    </>
  );
}
